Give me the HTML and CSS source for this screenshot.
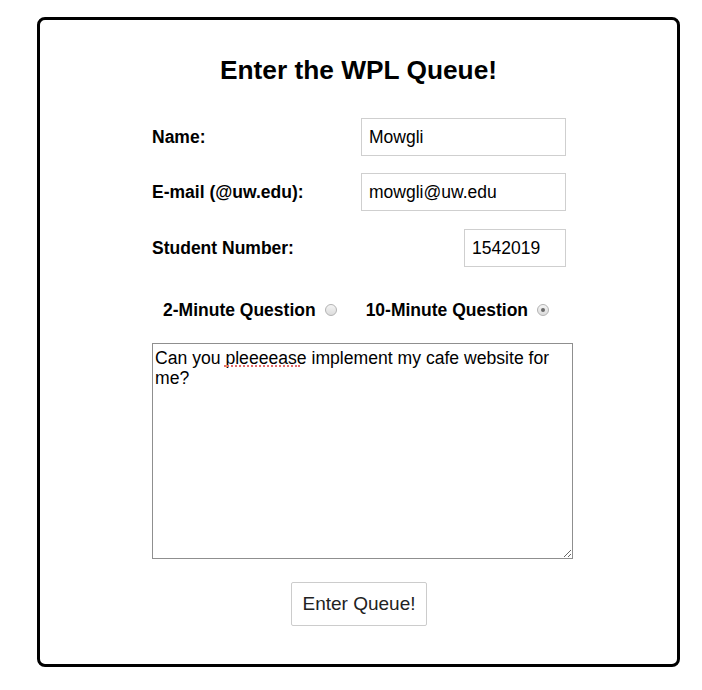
FILE: index.html
```html
<!DOCTYPE html>
<html>
<head>
<meta charset="utf-8">
<link rel="stylesheet" href="styles.css">
</head>
<body>
<div class="card">
  <h1 class="title">Enter the WPL Queue!</h1>
  <form class="form">
    <div class="row">
      <label class="label" for="name">Name:</label>
      <input class="field" id="name" type="text" value="Mowgli">
    </div>
    <div class="row">
      <label class="label" for="email">E-mail (@uw.edu):</label>
      <input class="field" id="email" type="text" value="mowgli@uw.edu">
    </div>
    <div class="row">
      <label class="label" for="num">Student Number:</label>
      <input class="field field-short" id="num" type="text" value="1542019">
    </div>
    <div class="radios">
      <label class="radio-label">2-Minute Question <input class="radio" type="radio" name="q"></label>
      <label class="radio-label">10-Minute Question <input class="radio" type="radio" name="q" checked></label>
    </div>
    <div class="question-wrap">
      <textarea class="question" spellcheck="false">Can you pleeeease implement my cafe website for me?</textarea>
      <span class="misspell"></span>
    </div>
    <div class="actions">
      <button class="submit" type="button">Enter Queue!</button>
    </div>
  </form>
</div>
</body>
</html>
```

FILE: styles.css
```css
html, body {
  margin: 0;
  padding: 0;
  background: #fff;
}
body {
  font-family: "Liberation Sans", Arial, Helvetica, sans-serif;
  font-size: 17.5px;
  color: #000;
}
.card {
  margin: 17px 22px 0 37px;
  border: 3px solid #000;
  border-radius: 8px;
  padding: 35px 0 38px 0;
  box-sizing: border-box;
  height: 650px;
}
.title {
  margin: 0;
  font-size: 26.3px;
  line-height: 30px;
  font-weight: bold;
  text-align: center;
}
.form {
  margin: 33px 0 0 112px;
  width: 414px;
  display: flex;
  flex-direction: column;
}
.row {
  display: flex;
  justify-content: space-between;
  align-items: center;
  height: 38px;
  margin-bottom: 17px;
}
.row:nth-child(2) {
  margin-bottom: 18px;
}
.label {
  font-weight: bold;
}
.field {
  box-sizing: border-box;
  width: 205px;
  height: 38px;
  border: 1px solid #cfcfcf;
  border-radius: 0;
  padding: 0 7px;
  font-family: "Liberation Sans", Arial, Helvetica, sans-serif;
  font-size: 17.5px;
  color: #000;
  outline: none;
}
.field-short {
  width: 102px;
}
.radios {
  display: flex;
  align-items: center;
  height: 20px;
  margin-top: 16px;
  padding-left: 11px;
  gap: 29px;
}
.radio-label {
  font-weight: bold;
  display: flex;
  align-items: center;
  gap: 9px;
  line-height: 20px;
}
.radio {
  appearance: none;
  -webkit-appearance: none;
  margin: 0;
  width: 12px;
  height: 12px;
  border-radius: 50%;
  border: 1px solid #b3b3b3;
  background: linear-gradient(#f4f4f4, #dcdcdc);
  box-sizing: border-box;
  position: relative;
}
.radio:checked::after {
  content: "";
  position: absolute;
  left: 3px;
  top: 3px;
  width: 4px;
  height: 4px;
  border-radius: 50%;
  background: #6a6a6a;
}
.question-wrap {
  position: relative;
  margin-top: 23px;
  width: 421px;
  height: 216px;
}
.question {
  display: block;
  box-sizing: border-box;
  margin: 0;
  width: 421px;
  height: 216px;
  border: 1px solid #8f8f8f;
  border-radius: 0;
  padding: 4px 2px;
  font-family: "Liberation Sans", Arial, Helvetica, sans-serif;
  font-size: 17.6px;
  line-height: 20px;
  color: #000;
  resize: both;
  outline: none;
}
.misspell {
  position: absolute;
  left: 72px;
  top: 22px;
  width: 76px;
  height: 0;
  border-bottom: 2px dotted #e36a6a;
  pointer-events: none;
}
.actions {
  margin-top: 23px;
  display: flex;
  justify-content: center;
}
.submit {
  box-sizing: border-box;
  height: 44px;
  padding: 0 10px;
  background: #fff;
  border: 1px solid #cccccc;
  border-radius: 2px;
  font-family: "Liberation Sans", Arial, Helvetica, sans-serif;
  font-size: 19px;
  color: #222;
}
```
